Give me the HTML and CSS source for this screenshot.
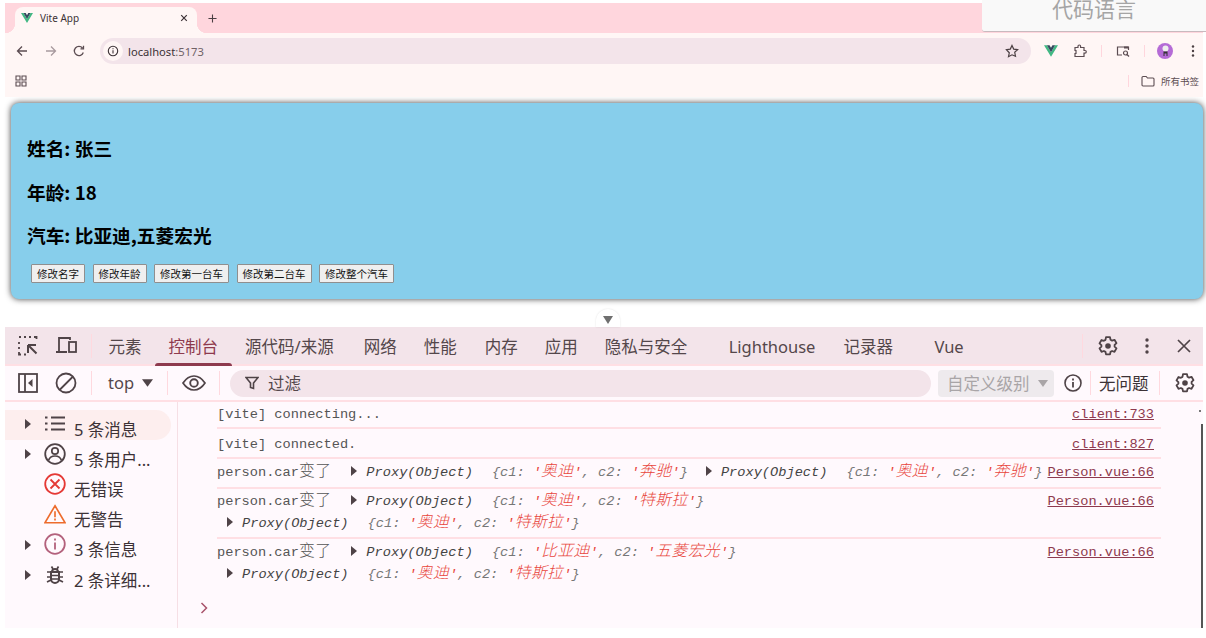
FILE: index.html
```html
<!DOCTYPE html>
<html lang="zh-CN">
<head>
<meta charset="utf-8">
<title>Vite App</title>
<link rel="stylesheet" href="styles.css">
</head>
<body>
<div class="floatbox">代码语言</div>
<div class="app">
  <div class="chrome">
    <div class="tabstrip">
      <div class="tab">
        <svg class="fav" viewBox="0 0 24 20"><path d="M0 0h5l7 12L19 0h5L12 20z" fill="#41b883"/><path d="M5 0h4.500L12 4.500 14.500 0H19l-7 12z" fill="#35495e"/></svg>
        <span class="tabtitle">Vite App</span>
        <svg class="tabclose" viewBox="0 0 10 10"><path d="M1.500 1.500l7 7M8.500 1.500l-7 7" stroke="#3c3236" stroke-width="1.500" fill="none"/></svg>
      </div>
      <svg class="newtab" viewBox="0 0 10 10"><path d="M5 .5v9M.5 5h9" stroke="#4a3f42" stroke-width="1.200" fill="none"/></svg>
    </div>
    <div class="navrow">
      <svg class="nav" viewBox="0 0 12 12"><path d="M11 6H2M6 1.500L1.500 6 6 10.500" stroke="#5c4d52" stroke-width="1.300" fill="none"/></svg>
      <svg class="nav dim" viewBox="0 0 12 12"><path d="M1 6h9M6 1.500L10.500 6 6 10.500" stroke="#a89a9e" stroke-width="1.300" fill="none"/></svg>
      <svg class="nav" viewBox="0 0 12 12"><path d="M10.300 7.500A4.600 4.600 0 1 1 9.500 3M10.500 .8v3h-3" stroke="#5c4d52" stroke-width="1.300" fill="none"/></svg>
      <div class="url">
        <span class="urlinfo"><svg viewBox="0 0 12 12"><circle cx="6" cy="6" r="4.700" stroke="#3c3236" stroke-width="1.100" fill="none"/><path d="M6 5.300v3.200M6 3.300v1" stroke="#3c3236" stroke-width="1.100"/></svg></span>
        <span class="host">localhost<span class="port">:5173</span></span>
        <svg class="star" viewBox="0 0 14 14"><path d="M7 1.500l1.700 3.600 3.900.5-2.900 2.700.8 3.900L7 10.800 3.500 12.700l.8-3.900L1.400 5.600l3.900-.5z" stroke="#4a3f42" stroke-width="1.200" fill="none"/></svg>
      </div>
      <svg class="ext first" viewBox="0 0 24 20"><path d="M0 0h5l7 12L19 0h5L12 20z" fill="#41b883"/><path d="M5 0h4.500L12 4.500 14.500 0H19l-7 12z" fill="#35495e"/></svg>
      <svg class="ext" viewBox="0 0 14 14"><path d="M2 3.500h3V2.300a1.300 1.300 0 0 1 2.600 0v1.200h3.400v3h1a1.300 1.300 0 0 1 0 2.600h-1v3.400H2V9.500h1V6.500H2z" stroke="#5c4d52" stroke-width="1.200" fill="none"/></svg>
      <i class="sep"></i>
      <svg class="ext" viewBox="0 0 14 14"><path d="M6 11H1.500V3h11v3" stroke="#5c4d52" stroke-width="1.200" fill="none"/><path d="M8 2.500h4.500v2H8z" fill="#5c4d52"/><circle cx="9.500" cy="9" r="2" stroke="#5c4d52" stroke-width="1.200" fill="none"/><path d="M11 10.500l2 2" stroke="#5c4d52" stroke-width="1.200"/></svg>
      <i class="sep"></i>
      <span class="avatar"><svg viewBox="0 0 16 16"><circle cx="8.500" cy="5.500" r="3" fill="#eee"/><path d="M6.500 13V8.500h4V13h-1v-2.500h-2V13z" fill="#333"/></svg></span>
      <svg class="ext dots" viewBox="0 0 4 14"><circle cx="2" cy="2.500" r="1.200" fill="#4a3f42"/><circle cx="2" cy="7" r="1.200" fill="#4a3f42"/><circle cx="2" cy="11.500" r="1.200" fill="#4a3f42"/></svg>
    </div>
    <div class="bookrow">
      <svg class="apps" viewBox="0 0 12 12"><path d="M1 1h4v4H1zM7 1h4v4H7zM1 7h4v4H1zM7 7h4v4H7z" stroke="#5c4d52" stroke-width="1.100" fill="none"/></svg>
      <i class="sep booksep"></i>
      <svg class="folder" viewBox="0 0 14 12"><path d="M1 2.500a1 1 0 0 1 1-1h3.200l1.300 1.500H12a1 1 0 0 1 1 1V10a1 1 0 0 1-1 1H2a1 1 0 0 1-1-1z" stroke="#5c4d52" stroke-width="1.100" fill="none"/></svg>
      <span class="booktext">所有书签</span>
    </div>
  </div>

  <div class="viewport">
    <section class="card">
      <h2 class="line">姓名: 张三</h2>
      <h2 class="line">年龄: 18</h2>
      <h2 class="line">汽车: 比亚迪,五菱宏光</h2>
      <div class="btns">
        <button class="btn">修改名字</button>
        <button class="btn">修改年龄</button>
        <button class="btn">修改第一台车</button>
        <button class="btn">修改第二台车</button>
        <button class="btn">修改整个汽车</button>
      </div>
    </section>
    <div class="handlezone"><div class="handle"><svg viewBox="0 0 10 10"><path d="M0 1h10L5 9z" fill="#6f6f6f"/></svg></div></div>
  </div>

  <div class="devtools">
    <div class="dt-tabs">
      <svg class="dico ico-a" viewBox="0 0 20 20"><path d="M1 1h2M6 1h2M11 1h2M16 1h2.500v2M1 6v2M1 11v2M1 16v2.500h2M6 18.500h2" stroke="#4f4347" stroke-width="1.800" fill="none"/><path d="M10 9h8M10 9v8M10 9l8.500 8.500" stroke="#4f4347" stroke-width="2" fill="none"/></svg>
      <svg class="dico ico-b" viewBox="0 0 22 20"><path d="M1 16h11M4 15V2h11v2" stroke="#4f4347" stroke-width="1.800" fill="none"/><rect x="14" y="6" width="7" height="10" stroke="#4f4347" stroke-width="1.800" fill="none"/></svg>
      <i class="dsep"></i>
      <nav class="tablist">
        <span class="dt-tab">元素</span>
        <span class="dt-tab on">控制台</span>
        <span class="dt-tab wide">源代码/来源</span>
        <span class="dt-tab">网络</span>
        <span class="dt-tab mem">性能</span>
        <span class="dt-tab">内存</span>
        <span class="dt-tab">应用</span>
        <span class="dt-tab gapr">隐私与安全</span>
        <span class="dt-tab lh">Lighthouse</span>
        <span class="dt-tab gapr2">记录器</span>
        <span class="dt-tab">Vue</span>
      </nav>
      <i class="dsep right"></i>
      <svg class="gear g1" viewBox="0 0 20 20"><use href="#gearshape"/></svg>
      <svg class="kebab" viewBox="0 0 4 18"><circle cx="2" cy="3" r="1.700" fill="#4f4347"/><circle cx="2" cy="9" r="1.700" fill="#4f4347"/><circle cx="2" cy="15" r="1.700" fill="#4f4347"/></svg>
      <svg class="closex" viewBox="0 0 14 14"><path d="M1 1l12 12M13 1L1 13" stroke="#4f4347" stroke-width="1.700" fill="none"/></svg>
    </div>
    <div class="dt-bar">
      <svg class="dico bar-a" viewBox="0 0 20 20"><rect x="1" y="1" width="18" height="18" stroke="#4f4347" stroke-width="1.800" fill="none"/><path d="M7 1v18" stroke="#4f4347" stroke-width="1.800"/><path d="M14.500 6v8l-4.500-4z" fill="#4f4347"/></svg>
      <svg class="dico bar-b" viewBox="0 0 22 22"><circle cx="11" cy="11" r="9.500" stroke="#4f4347" stroke-width="1.800" fill="none"/><path d="M4.500 18L18 4.500" stroke="#4f4347" stroke-width="1.800"/></svg>
      <i class="dsep"></i>
      <span class="topsel">top</span><svg class="caret" viewBox="0 0 10 7"><path d="M0 0h10L5 7z" fill="#4f4347"/></svg>
      <i class="dsep s2"></i>
      <svg class="eye" viewBox="0 0 24 16"><path d="M1 8c3-4.500 7-7 11-7s8 2.500 11 7c-3 4.500-7 7-11 7S4 12.500 1 8z" stroke="#4f4347" stroke-width="1.700" fill="none"/><circle cx="12" cy="8" r="3.800" stroke="#4f4347" stroke-width="1.900" fill="none"/></svg>
      <i class="dsep s3"></i>
      <div class="filter">
        <svg viewBox="0 0 14 14"><path d="M1 1.500h12L8.500 7v5.500l-3-1V7z" stroke="#4f4347" stroke-width="1.600" fill="none"/></svg>
        <span>过滤</span>
      </div>
      <div class="level"><span>自定义级别</span><svg viewBox="0 0 10 7"><path d="M0 0h10L5 7z" fill="#a9a5a7"/></svg></div>
      <svg class="infoi" viewBox="0 0 18 18"><circle cx="9" cy="9" r="8" stroke="#4f4347" stroke-width="1.600" fill="none"/><path d="M9 8v5.500M9 4.500v2" stroke="#4f4347" stroke-width="1.800"/></svg>
      <i class="dsep s4"></i>
      <span class="noissue">无问题</span>
      <i class="dsep s5"></i>
      <svg class="gear g2" viewBox="0 0 20 20"><use href="#gearshape"/></svg>
    </div>
    <div class="dt-main">
      <aside class="side">
        <div class="sitem sel">
          <svg class="tri" viewBox="0 0 6 10"><path d="M0 0l6 5-6 5z"/></svg>
          <svg class="sico" viewBox="0 0 22 18"><path d="M7 2.500h14M7 8.500h14M7 14.500h14" stroke="#4f4347" stroke-width="2"/><path d="M1 1.500h2.500v2H1zM1 7.500h2.500v2H1zM1 13.500h2.500v2H1z" fill="#4f4347"/></svg>
          <span>5 条消息</span>
        </div>
        <div class="sitem">
          <svg class="tri" viewBox="0 0 6 10"><path d="M0 0l6 5-6 5z"/></svg>
          <svg class="sico" viewBox="0 0 22 22"><circle cx="11" cy="11" r="9.800" stroke="#4f4347" stroke-width="1.800" fill="none"/><circle cx="11" cy="8" r="3.200" stroke="#4f4347" stroke-width="1.700" fill="none"/><path d="M4.500 17.500c1-3.500 3.500-4.500 6.500-4.500s5.500 1 6.500 4.500" stroke="#4f4347" stroke-width="1.700" fill="none"/></svg>
          <span>5 条用户...</span>
        </div>
        <div class="sitem">
          <i class="tri-space"></i>
          <svg class="sico" viewBox="0 0 22 22"><circle cx="11" cy="11" r="9.800" stroke="#e53935" stroke-width="1.800" fill="none"/><path d="M6.500 6.500l9 9M15.500 6.500l-9 9" stroke="#e53935" stroke-width="1.800"/></svg>
          <span>无错误</span>
        </div>
        <div class="sitem">
          <i class="tri-space"></i>
          <svg class="sico" viewBox="0 0 24 21"><path d="M12 1.500L23 20H1z" stroke="#ed6c2d" stroke-width="1.800" fill="none"/><path d="M12 7.500v6.500M12 15.500v2" stroke="#ed6c2d" stroke-width="1.800"/></svg>
          <span>无警告</span>
        </div>
        <div class="sitem">
          <svg class="tri" viewBox="0 0 6 10"><path d="M0 0l6 5-6 5z"/></svg>
          <svg class="sico" viewBox="0 0 22 22"><circle cx="11" cy="11" r="9.800" stroke="#b3617c" stroke-width="1.800" fill="none"/><path d="M11 9.500v7M11 5.500v2" stroke="#b3617c" stroke-width="1.800"/></svg>
          <span>3 条信息</span>
        </div>
        <div class="sitem">
          <svg class="tri" viewBox="0 0 6 10"><path d="M0 0l6 5-6 5z"/></svg>
          <svg class="sico" viewBox="0 0 22 22"><path d="M7 8h8v7a4 4 0 0 1-8 0zM8 8a3 3 0 0 1 6 0" stroke="#4f4347" stroke-width="2" fill="none"/><path d="M7.500 2.500L9 5M14.500 2.500L13 5M3 8h4M3 13h4M3 18l4-2M19 8h-4M19 13h-4M19 18l-4-2M7 11.500h8M7 15h8" stroke="#4f4347" stroke-width="1.700"/></svg>
          <span>2 条详细...</span>
        </div>
      </aside>
      <div class="console">
        <div class="msg m1">
          <div class="body"><div>[vite] connecting...</div></div>
          <a class="src">client:733</a>
        </div>
        <div class="msg m2">
          <div class="body"><div>[vite] connected.</div></div>
          <a class="src">client:827</a>
        </div>
        <div class="msg m3">
          <div class="body"><div>person.car<span class="zh">变了</span><svg class="otri" viewBox="0 0 6 10"><path d="M0 0l6 5-6 5z"/></svg><em class="px">Proxy(Object)</em><em class="pre">{c1: <b>'<span class="zh">奥迪</span>'</b>, c2: <b>'<span class="zh">奔驰</span>'</b>}</em><svg class="otri second" viewBox="0 0 6 10"><path d="M0 0l6 5-6 5z"/></svg><em class="px">Proxy(Object)</em><em class="pre">{c1: <b>'<span class="zh">奥迪</span>'</b>, c2: <b>'<span class="zh">奔驰</span>'</b>}</em></div></div>
          <a class="src">Person.vue:66</a>
        </div>
        <div class="msg m4">
          <div class="body">
            <div>person.car<span class="zh">变了</span><svg class="otri" viewBox="0 0 6 10"><path d="M0 0l6 5-6 5z"/></svg><em class="px">Proxy(Object)</em><em class="pre">{c1: <b>'<span class="zh">奥迪</span>'</b>, c2: <b>'<span class="zh">特斯拉</span>'</b>}</em></div>
            <div class="l2"><svg class="otri ind" viewBox="0 0 6 10"><path d="M0 0l6 5-6 5z"/></svg><em class="px">Proxy(Object)</em><em class="pre">{c1: <b>'<span class="zh">奥迪</span>'</b>, c2: <b>'<span class="zh">特斯拉</span>'</b>}</em></div>
          </div>
          <a class="src">Person.vue:66</a>
        </div>
        <div class="msg m5">
          <div class="body">
            <div>person.car<span class="zh">变了</span><svg class="otri" viewBox="0 0 6 10"><path d="M0 0l6 5-6 5z"/></svg><em class="px">Proxy(Object)</em><em class="pre">{c1: <b>'<span class="zh">比亚迪</span>'</b>, c2: <b>'<span class="zh">五菱宏光</span>'</b>}</em></div>
            <div class="l2"><svg class="otri ind" viewBox="0 0 6 10"><path d="M0 0l6 5-6 5z"/></svg><em class="px">Proxy(Object)</em><em class="pre">{c1: <b>'<span class="zh">奥迪</span>'</b>, c2: <b>'<span class="zh">特斯拉</span>'</b>}</em></div>
          </div>
          <a class="src">Person.vue:66</a>
        </div>
        <svg class="prompt" viewBox="0 0 8 12"><path d="M1.500 1l5 5-5 5" stroke="#a9536b" stroke-width="1.500" fill="none"/></svg>
        <i class="scrollup"></i>
        <i class="scrollbar"></i>
      </div>
    </div>
  </div>
</div>
<svg class="defs" width="0" height="0"><defs><symbol id="gearshape" viewBox="0 0 20 20"><path d="M8 1.200h4l.5 2.500 1.600.9 2.400-.8 2 3.400-1.900 1.700v1.800l1.900 1.700-2 3.400-2.400-.8-1.600.9-.5 2.500H8l-.5-2.500-1.600-.9-2.400.8-2-3.400 1.900-1.700V9.100L1.500 7.400l2-3.400 2.400.8 1.600-.9z" stroke="#4f4347" stroke-width="1.800" fill="none" stroke-linejoin="round"/><circle cx="10" cy="10" r="2.800" fill="#4f4347"/></symbol></defs></svg>
</body>
</html>
```

FILE: styles.css
```css
* { box-sizing: border-box; }
html, body { margin: 0; padding: 0; }
body {
  width: 1206px;
  height: 638px;
  overflow: hidden;
  background: #fff;
  font-family: "Noto Sans", "Noto Sans CJK SC", sans-serif;
  color: #4a3f42;
  position: relative;
}
.defs { position: absolute; }
svg { display: block; flex: none; }
.floatbox {
  position: absolute;
  z-index: 5;
  left: 982px;
  top: 0;
  width: 224px;
  height: 32px;
  background: #f9f9f9;
  border-bottom: 1px solid #c9b9be;
  border-radius: 0 0 0 3px;
  color: #a5a5a5;
  font-family: "Noto Sans CJK SC", sans-serif;
  font-size: 21px;
  line-height: 17px;
  padding-left: 70px;
}
.app { margin: 3px 3px 0 5px; width: 1198px; }

/* browser chrome */
.chrome { position: relative; z-index: 2; background: #fff6f5; height: 94px; }
.tabstrip { height: 30px; background: #ffd6dd; display: flex; align-items: flex-end; padding-left: 10px; }
.tab {
  position: relative;
  width: 182px;
  height: 26px;
  background: #fff6f5;
  border-radius: 8px 8px 0 0;
  display: flex;
  align-items: center;
  padding: 0 9px 4px 6px;
}
.tab::before, .tab::after { content: ""; position: absolute; bottom: 0; width: 10px; height: 10px; }
.tab::before { left: -10px; background: radial-gradient(circle at 0 0, transparent 10px, #fff6f5 10.500px); }
.tab::after { right: -10px; background: radial-gradient(circle at 100% 0, transparent 10px, #fff6f5 10.500px); }
.fav { width: 12px; height: 10px; }
.tabtitle { margin-left: 7px; font-size: 10px; line-height: 14px; color: #3c3236; flex: 1; font-family: "Noto Sans", sans-serif; }
.tabclose { width: 8px; height: 8px; }
.newtab { width: 9px; height: 9px; margin: 0 0 10px 11px; }
.navrow { height: 34px; display: flex; align-items: center; padding: 2px 0 0 12px; }
.nav { width: 12px; height: 12px; margin-right: 16px; margin-left: -1px; }
.nav:nth-of-type(2) { margin-left: 1px; }
.nav:nth-of-type(3) { margin-left: 0; margin-right: 0; }
.url {
  margin-left: 15px;
  width: 931px;
  height: 26px;
  border-radius: 13px;
  background: #f3e4ea;
  display: flex;
  align-items: center;
  padding-left: 3px;
}
.urlinfo { width: 20px; height: 20px; border-radius: 50%; background: #fff6f5; display: flex; align-items: center; justify-content: center; }
.urlinfo svg { width: 12px; height: 12px; }
.host { margin-left: 5px; font-size: 11.200px; color: #3c3236; flex: 1; }
.port { color: #6f6266; }
.star { width: 14px; height: 14px; margin-right: 12px; }
.ext { width: 14px; height: 14px; margin-left: 15px; }
.ext.first { width: 14px; height: 12px; margin-left: 13px; }
.sep { width: 1px; height: 12px; background: #ffd6dd; margin-left: 14px; margin-right: -1px; flex: none; }
.avatar { width: 16px; height: 16px; border-radius: 50%; background: #b56bd6; margin-left: 13px; overflow: hidden; flex: none; }
.avatar svg { width: 16px; height: 16px; }
.ext.dots { width: 4px; margin-left: 18px; }
.bookrow { height: 30px; display: flex; align-items: center; padding: 0 0 2px 10px; }
.apps { width: 12px; height: 12px; }
.sep.booksep { margin-left: auto; height: 12px; margin-right: 12px; }
.folder { width: 14px; height: 12px; }
.booktext { font-size: 9.500px; margin: 0 4px 0 6px; color: #5c4d52; }

/* page */
.viewport { padding: 6px 0 0 6px; }
.card {
  width: 1192px;
  height: 196px;
  background: #87ceeb;
  border-radius: 8px;
  box-shadow: 0 0 6px rgba(0, 0, 0, .75);
  padding: 33px 16px 0;
  display: flex;
  flex-direction: column;
  gap: 19.500px;
}
.line {
  margin: 0;
  font-size: 18.700px;
  line-height: 24px;
  font-weight: 700;
  color: #000;
  font-family: "Noto Sans CJK SC", sans-serif;
}
.btns { display: flex; margin: -2.500px 0 0 4px; gap: 7.500px; }
.btn {
  height: 19px;
  padding: 0 5px;
  background: #efefef;
  border: 1px solid #8f8f8f;
  border-radius: 1px;
  font-size: 10.500px;
  line-height: 16px;
  color: #111;
  font-family: "Noto Sans CJK SC", sans-serif;
}
.handlezone { height: 28px; display: flex; justify-content: center; align-items: flex-end; padding-left: 1px; }
.handle {
  width: 24px;
  height: 18px;
  border-radius: 12px 12px 0 0;
  background: #fff;
  box-shadow: 0 0 2px rgba(0, 0, 0, .12);
  display: flex;
  justify-content: center;
  padding-top: 6px;
}
.handle svg { width: 10px; height: 10px; }

/* devtools */
.devtools { height: 301px; background: #fff9fd; font-size: 16.500px; }
.dt-tabs {
  height: 39px;
  background: #f3e4ea;
  border-bottom: 2px solid #ffdfe4;
  display: flex;
  align-items: center;
}
.dico { height: 20px; }
.ico-a { width: 20px; margin-left: 13px; }
.ico-b { width: 22px; margin-left: 17px; }
.dsep { width: 1px; height: 24px; background: #ffd9df; margin-left: 14px; flex: none; }
.tablist { display: flex; align-self: stretch; margin-left: 3px; }
.dt-tab {
  padding: 2px 13.500px 0;
  position: relative;
  display: flex;
  align-items: center;
  color: #54474b;
  white-space: nowrap;
  line-height: 22px;
}
.dt-tab.on { color: #8e3a4e; }
.dt-tab.on::after {
  content: "";
  position: absolute;
  left: 0;
  right: 0;
  bottom: -2px;
  height: 3px;
  background: #8e3a4e;
  border-radius: 3px 3px 0 0;
}
.dt-tab.wide { padding-right: 16.500px; }
.dt-tab.mem { padding-right: 14.500px; }
.dt-tab.gapr { padding-right: 28px; }
.dt-tab.lh { padding-right: 14.500px; }
.dt-tab.gapr2 { padding-right: 28px; }
.dsep.right { margin-left: auto; margin-right: 0; }
.gear { width: 20px; height: 20px; }
.g1 { margin-left: 15px; }
.kebab { width: 4px; height: 18px; margin-left: 27px; }
.closex { width: 14px; height: 14px; margin: 0 12px 0 28px; }

.dt-bar {
  height: 36px;
  background: #fff9fd;
  border-bottom: 2px solid #ffdfe4;
  display: flex;
  align-items: center;
}
.bar-a { width: 20px; margin-left: 13px; }
.bar-b { width: 22px; height: 22px; margin-left: 17px; }
.topsel { margin-left: 16px; line-height: 20px; color: #54474b; }
.caret { width: 11px; height: 8px; margin-left: 8px; }
.dsep.s2 { margin-left: 14px; }
.eye { width: 24px; height: 16px; margin-left: 14px; }
.dsep.s3 { margin-left: 13px; }
.filter {
  margin-left: 10px;
  width: 701px;
  height: 27px;
  border-radius: 13.500px;
  background: #f3e4ea;
  display: flex;
  align-items: center;
  padding-left: 15px;
  gap: 9px;
  color: #54474b;
}
.filter svg { width: 14px; height: 14px; }
.level {
  margin-left: 7px;
  width: 116px;
  height: 27px;
  border-radius: 4px;
  background: #eeeaed;
  color: #a9a5a7;
  display: flex;
  align-items: center;
  padding-left: 9px;
  gap: 8px;
}
.level svg { width: 10px; height: 7px; }
.infoi { width: 18px; height: 18px; margin-left: 10px; }
.dsep.s4 { margin-left: 8px; }
.noissue { margin-left: 8px; color: #3c3236; }
.dsep.s5 { margin-left: 10px; }
.g2 { margin-left: 15px; }

.dt-main { display: flex; height: 226px; }
.side { width: 173px; border-right: 1px solid #f6dfe5; padding-top: 8px; flex: none; }
.sitem { height: 30.200px; display: flex; align-items: center; padding-left: 20px; width: 166px; color: #3c3236; line-height: 22px; white-space: nowrap; }
.sitem.sel { background: #fdeeee; border-radius: 0 15px 15px 0; }
.sitem span { margin-top: 9px; }
.tri { width: 6px; height: 10px; fill: #4f4347; margin-top: -2px; }
.tri-space { width: 6px; flex: none; }
.sico { width: 22px; height: 22px; margin: -3px 8px 0 13px; }
.console {
  position: relative;
  flex: 1;
  min-width: 0;
  font-family: "Liberation Mono", "Noto Sans CJK SC", monospace;
  font-size: 13.670px;
  line-height: 22px;
  color: #555;
}
.msg {
  margin-left: 39px;
  width: 944px;
  display: flex;
  justify-content: space-between;
  border-bottom: 2px solid #ffdfe4;
  padding-right: 7px;
  white-space: nowrap;
}
.m1 { height: 27px; padding-top: 2px; }
.m2 { height: 30px; padding-top: 5px; }
.m3 { height: 30px; padding-top: 3px; }
.m4 { height: 50px; padding-top: 2px; }
.m5 { height: 50px; border-bottom: 0; padding-top: 3px; }
.src { color: #8e3a4e; text-decoration: underline; }
.zh { font-family: "Noto Sans CJK SC", sans-serif; font-size: 15.800px; font-weight: 300; letter-spacing: .4px; line-height: 0; }
.otri { display: inline-block; width: 6px; height: 10px; fill: #4f4347; margin: 0 9px 0 20px; }
.otri.second { margin-left: 18px; }
.otri.ind { margin-left: 10px; }
.px { color: #444; }
.pre { color: #777; margin-left: 19px; }
.pre b { color: #e8453c; font-weight: 400; }
.prompt { position: absolute; left: 22px; top: 200px; width: 8px; height: 12px; }
.scrollup { position: absolute; right: 2px; top: 8px; width: 2px; height: 2px; background: #777; }
.scrollbar { position: absolute; right: 0; top: 22px; bottom: 0; width: 2px; background: #555; }
```
